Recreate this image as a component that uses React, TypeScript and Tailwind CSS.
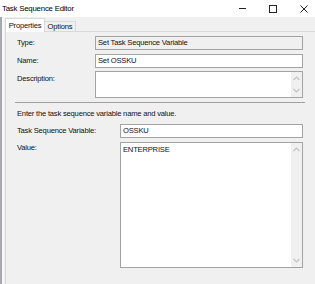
import React from 'react';

function Chevron({ up }: { up?: boolean }) {
  return (
    <svg width="7" height="5" viewBox="0 0 7 5" className="block">
      <path
        d={up ? 'M0.5 4 L3.5 1 L6.5 4' : 'M0.5 1 L3.5 4 L6.5 1'}
        fill="none"
        stroke="#c2c2c2"
        strokeWidth="1.2"
      />
    </svg>
  );
}

function ScrollTrack() {
  return (
    <div className="w-[11px] h-full bg-[#f0f0f0] flex flex-col items-center justify-between py-[4px]">
      <Chevron up />
      <Chevron />
    </div>
  );
}

function Row({
  label,
  labelW,
  labelTop,
  boxW,
  h,
  children,
  className = '',
}: {
  label: string;
  labelW: string;
  labelTop: string;
  boxW: string;
  h: string;
  children: React.ReactNode;
  className?: string;
}) {
  return (
    <div className={`flex items-start ${className}`}>
      <div className={`${labelW} ${labelTop} shrink-0 leading-[10px]`}>{label}</div>
      <div className={`${boxW} ${h} shrink-0 border border-[#a3a3a3] flex`}>{children}</div>
    </div>
  );
}

export default function App() {
  return (
    <div className="w-[315px] h-[284px] overflow-hidden bg-[#f0f0f0] text-[#111] text-[7.6px] tracking-[-0.2px] font-['Liberation_Sans',Arial,sans-serif] flex flex-col">
      {/* title bar */}
      <div className="h-[17px] bg-white flex items-center shrink-0">
        <div className="pl-[2px] text-[7.8px] text-black leading-none flex-1">Task Sequence Editor</div>
        <div className="w-[7px] h-[1px] bg-[#222] mr-[23px]" />
        <div className="w-[8px] h-[8px] border border-[#222] mr-[23px]" />
        <svg width="8" height="8" viewBox="0 0 8 8" className="mr-[7px]">
          <path d="M0.5 0.5 L7.5 7.5 M7.5 0.5 L0.5 7.5" stroke="#222" strokeWidth="1" />
        </svg>
      </div>

      <div className="flex flex-1 min-h-0">
        <div className="w-[2px] bg-[#a6a9b0] shrink-0" />
        <div className="w-[2px] bg-[#f7f7f7] shrink-0" />
        <div className="flex-1 flex flex-col pl-[1px]">
          {/* tabs */}
          <div className="flex items-end h-[14px] pt-[1px] shrink-0">
            <div className="w-[40px] h-[14px] bg-white border border-b-0 border-[#d9d9d9] flex items-center justify-center leading-none relative top-[1px]">
              Properties
            </div>
            <div className="w-[31px] h-[10px] border border-b-0 border-l-0 border-[#d9d9d9] flex items-center justify-center leading-none">
              Options
            </div>
          </div>

          {/* panel */}
          <div className="flex-1 border-l border-t border-[#d9d9d9] pl-[11px] pt-[4px]">
            <Row label="Type:" labelW="w-[78px]" labelTop="mt-[2px]" boxW="w-[208px]" h="h-[14px]">
              <div className="bg-[#f0f0f0] flex-1 flex items-center pl-[2px] leading-none">
                Set Task Sequence Variable
              </div>
            </Row>
            <Row label="Name:" labelW="w-[78px]" labelTop="mt-[2px]" boxW="w-[208px]" h="h-[14px]" className="mt-[4px]">
              <div className="bg-white flex-1 flex items-center pl-[2px] leading-none">Set OSSKU</div>
            </Row>
            <Row label="Description:" labelW="w-[78px]" labelTop="mt-[3px]" boxW="w-[208px]" h="h-[27px]" className="mt-[3px]">
              <div className="bg-white flex-1" />
              <ScrollTrack />
            </Row>

            <div className="h-[1px] bg-[#a0a0a0] w-[290px] ml-[-2px] mt-[4px]" />

            <div className="mt-[6px] leading-[10px]">Enter the task sequence variable name and value.</div>

            <Row
              label="Task Sequence Variable:"
              labelW="w-[103px]"
              labelTop="mt-[2px]"
              boxW="w-[183px]"
              h="h-[14px]"
              className="mt-[5px]"
            >
              <div className="bg-white flex-1 flex items-center pl-[2px] leading-none">OSSKU</div>
            </Row>
            <Row label="Value:" labelW="w-[103px]" labelTop="mt-[1px]" boxW="w-[183px]" h="h-[126px]" className="mt-[4px]">
              <div className="bg-white flex-1 pl-[2px] pt-[2px] leading-[10px]">ENTERPRISE</div>
              <ScrollTrack />
            </Row>
          </div>
        </div>
      </div>
    </div>
  );
}
